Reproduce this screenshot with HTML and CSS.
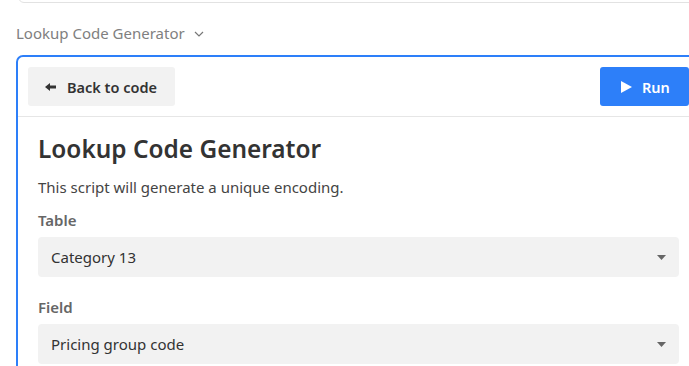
FILE: index.html
```html
<!DOCTYPE html>
<html>
<head>
<meta charset="utf-8">
<link rel="stylesheet" href="styles.css">
</head>
<body>
<div class="page">
  <div class="prev-card"></div>
  <div class="block-label">
    <span>Lookup Code Generator</span>
    <svg class="chev" width="10" height="6" viewBox="0 0 10 6"><path d="M1 1 L5 5 L9 1" fill="none" stroke="#777" stroke-width="1.2"/></svg>
  </div>
  <div class="card">
    <div class="card-header">
      <button class="btn btn-back">
        <svg width="12" height="8" viewBox="0 0 12 8"><path d="M0 4 L5 0 L5 2.5 L11 2.5 L11 5.5 L5 5.5 L5 8 Z" fill="#333"/></svg>
        <span>Back to code</span>
      </button>
      <button class="btn btn-run">
        <svg width="11" height="12" viewBox="0 0 11 12"><path d="M0 0 L11 6 L0 12 Z" fill="#fff"/></svg>
        <span>Run</span>
      </button>
    </div>
    <div class="card-body">
      <h1 class="title">Lookup Code Generator</h1>
      <p class="desc">This script will generate a unique encoding.</p>
      <div class="field">
        <div class="field-label">Table</div>
        <div class="select">
          <span>Category 13</span>
          <svg class="caret" width="9" height="5" viewBox="0 0 9 5"><path d="M0 0 L9 0 L4.5 5 Z" fill="#666"/></svg>
        </div>
      </div>
      <div class="field">
        <div class="field-label">Field</div>
        <div class="select">
          <span>Pricing group code</span>
          <svg class="caret" width="9" height="5" viewBox="0 0 9 5"><path d="M0 0 L9 0 L4.5 5 Z" fill="#666"/></svg>
        </div>
      </div>
    </div>
  </div>
</div>
</body>
</html>
```
FILE: styles.css
```css
html, body {
  margin: 0;
  padding: 0;
  overflow: hidden;
  background: #fff;
}
body {
  font-family: "Noto Sans", "Open Sans", sans-serif;
  color: #333;
}
.page {
  width: 685px;
  padding-left: 16px;
}
.prev-card {
  margin-left: 2px;
  margin-top: -10px;
  height: 11px;
  border: 1px solid #e2e2e2;
  border-radius: 6px;
}
.block-label {
  display: flex;
  align-items: center;
  gap: 9px;
  height: 20px;
  margin-top: 20px;
  color: #808080;
  font-size: 15px;
}
.chev { margin-top: 1px; }
.card {
  margin-top: 12px;
  border: 2px solid #2d7ff9;
  border-radius: 7px;
}
.card-header {
  display: flex;
  justify-content: space-between;
  padding: 10px;
  border-bottom: 1px solid #e6e6e6;
}
.btn {
  display: flex;
  align-items: center;
  height: 39px;
  border: none;
  border-radius: 3px;
  font-family: inherit;
  font-size: 14.5px;
  font-weight: 600;
  white-space: nowrap;
  box-sizing: border-box;
}
.btn-back {
  background: #f2f2f2;
  color: #333;
  width: 147px;
  padding: 0 0 0 17px;
  gap: 10px;
}
.btn-run {
  background: #2d7ff9;
  color: #fff;
  width: 89px;
  padding: 0 0 0 21px;
  gap: 10px;
}
.card-body {
  padding: 15px 20px 20px;
}
.title {
  margin: 0;
  font-size: 24.4px;
  font-weight: 600;
  line-height: 34px;
  color: #333;
}
.desc {
  margin: 11px 0 0;
  font-size: 15px;
  line-height: 20px;
  color: #444;
}
.field {
  margin-top: 13px;
}
.field + .field {
  margin-top: 20px;
}
.field-label {
  font-size: 15px;
  font-weight: 600;
  line-height: 20px;
  color: #666;
  margin-bottom: 7px;
}
.select {
  display: flex;
  align-items: center;
  justify-content: space-between;
  height: 40px;
  padding: 0 13px 0 13px;
  background: #f2f2f2;
  border-radius: 4px;
  font-size: 15px;
  color: #333;
}
.caret { margin-top: 1px; }
```
